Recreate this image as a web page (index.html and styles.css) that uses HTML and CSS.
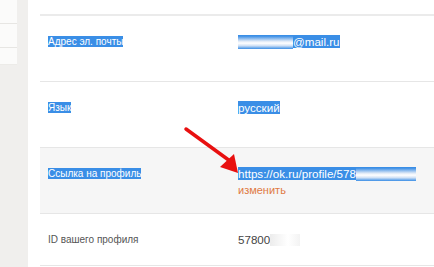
FILE: index.html
```html
<!DOCTYPE html>
<html lang="ru">
<head>
<meta charset="utf-8">
<link rel="stylesheet" href="styles.css">
</head>
<body>
<div class="page">
  <aside class="side">
    <div class="side-card">
      <div class="side-item"></div>
      <div class="side-item"></div>
    </div>
  </aside>
  <main class="main">
    <div class="table">
      <div class="row">
        <div class="label"><span class="sel">Адрес эл. почты</span></div>
        <div class="value"><span class="sel"><span class="blur"></span>@mail.ru</span></div>
      </div>
      <div class="row">
        <div class="label"><span class="sel">Язык</span></div>
        <div class="value"><span class="sel">русский</span></div>
      </div>
      <div class="row row-hl">
        <div class="label"><span class="sel">Ссылка на профиль</span></div>
        <div class="value">
          <span class="sel">https://ok.ru/profile/578<span class="blur blur-long"></span></span>
          <a class="change">изменить</a>
        </div>
      </div>
      <div class="row row-last">
        <div class="label plain">ID вашего профиля</div>
        <div class="value plain">57800<span class="blur-w"></span></div>
      </div>
    </div>
    <svg class="arrow" width="70" height="50" viewBox="0 0 70 50">
      <line x1="4" y1="3" x2="48" y2="35" stroke="#e81010" stroke-width="3.5" stroke-linecap="round"/>
      <polygon points="56,47 38,41 52,28" fill="#e81010"/>
    </svg>
  </main>
</div>
</body>
</html>
```
FILE: styles.css
```css
html, body {
  margin: 0;
  padding: 0;
  background: #f0efed;
  font-family: "Liberation Sans", Arial, sans-serif;
}
.page {
  display: flex;
  width: 434px;
  height: 267px;
  overflow: hidden;
}
.side {
  width: 28px;
  flex: none;
  background: #f0efed;
}
.side-card {
  width: 17px;
  height: 64px;
  background: #fbfbfa;
  border-bottom: 1px solid #ecebe8;
}
.side-item {
  height: 23px;
  border-bottom: 1px solid #e7e6e3;
}
.main {
  position: relative;
  flex: 1;
  background: #fff;
  padding: 14px 0 0 12px;
}
.table {
  border-top: 2px solid #ebebeb;
}
.row {
  display: grid;
  grid-template-columns: 198px 1fr;
  border-bottom: 1px solid #e6e6e6;
  box-sizing: border-box;
  height: 66px;
}
.row-hl {
  background: #f6f6f6;
}
.row-last {
  height: 52px;
}
.label {
  padding: 20px 0 0 8px;
  font-size: 10px;
  line-height: 12px;
  color: #555;
}
.value {
  padding: 19px 0 0 0;
  font-size: 11.6px;
  line-height: 14px;
  color: #444;
}
.sel {
  background: #3a8ee6;
  color: #fff;
}
.blur {
  display: inline-block;
  width: 55px;
  height: 13px;
  vertical-align: -3px;
  background: linear-gradient(180deg, #3a8ee6 0%, #dfe9f6 40%, #ffffff 55%, #cfe0f5 75%, #3a8ee6 100%);
}
.blur-long {
  width: 60px;
}
.blur-w {
  display: inline-block;
  width: 30px;
  height: 12px;
  vertical-align: -2px;
  background: linear-gradient(90deg, #ececec, #fff 60%, #f3f3f3);
}
.change {
  display: block;
  font-size: 11px;
  line-height: 13px;
  color: #e07a44;
  margin-top: 3px;
}
.arrow {
  position: absolute;
  left: 154px;
  top: 126px;
}
```
